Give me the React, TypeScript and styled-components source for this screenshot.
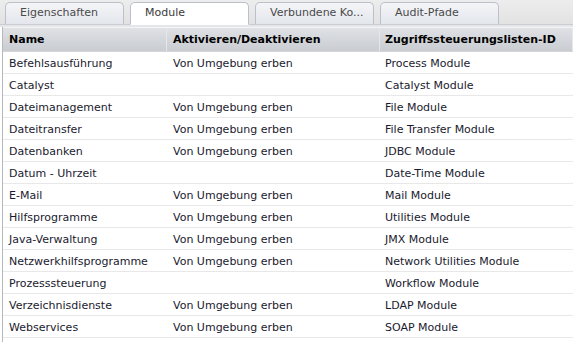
import React from "react";
import styled, { createGlobalStyle } from "styled-components";

const Global = createGlobalStyle`
	html, body { margin: 0; padding: 0; background: #fff; }
	body { font-family: "DejaVu Sans", Verdana, sans-serif; font-size: 11px; color: #000; }
`

const Page = styled.div({
	width: 573,
	height: 342,
	overflow: 'hidden',
	display: 'flex',
	flexDirection: 'column',
	background: '#fff'
})

const TabBar = styled.div({
	height: 25,
	display: 'flex',
	alignItems: 'flex-end',
	gap: 6,
	paddingLeft: 5,
	background: 'linear-gradient(#ededed, #e2e2e2)',
	borderBottom: '1px solid #c9ccd2',
	boxSizing: 'border-box'
})

const Tab = styled.div<{ $active?: boolean }>(({ $active }) => ({
	width: 119,
	height: $active ? 23 : 22,
	boxSizing: 'border-box',
	border: '1px solid #bcc0c8',
	borderBottom: $active ? '1px solid #fff' : 'none',
	borderRadius: '5px 5px 0 0',
	background: $active ? '#fff' : 'linear-gradient(#f4f5f8, #e3e6ec)',
	color: $active ? '#3a3a3a' : '#4a4a4a',
	padding: '3px 0 0 14px',
	marginBottom: $active ? -1 : 0,
	whiteSpace: 'nowrap',
	position: 'relative'
}))

const Strip = styled.div({
	height: 2,
	background: '#e4e6ea'
})

const Table = styled.div({
	flex: 1,
	borderLeft: '1px solid #b5b8be',
	marginLeft: 2,
	display: 'flex',
	flexDirection: 'column'
})

const Grid = styled.div({
	display: 'grid',
	gridTemplateColumns: '164px 213px 1fr'
})

const HeadRow = styled(Grid)({
	height: 23,
	background: 'linear-gradient(#dfe1e5, #c9ccd1)',
	borderTop: '1px solid #f4f5f7',
	borderBottom: '1px solid #d4d6da'
})

const HeadCell = styled.div({
	fontWeight: 'bold',
	display: 'flex',
	alignItems: 'center',
	paddingLeft: 6,
	borderRight: '1px solid #e6e7ea',
	whiteSpace: 'nowrap',
	overflow: 'hidden',
	color: '#000',
	'&:last-child': { paddingLeft: 5 }
})

const Row = styled(Grid)({
	height: 22,
	borderBottom: '1px solid #e8e8e8',
	boxSizing: 'border-box'
})

const Cell = styled.div({
	display: 'flex',
	alignItems: 'center',
	paddingLeft: 6,
	paddingTop: 1,
	whiteSpace: 'nowrap',
	color: '#1a1a2e',
	'&:last-child': { paddingLeft: 5 }
})

const rows: [string, string, string][] = [
	['Befehlsausführung', 'Von Umgebung erben', 'Process Module'],
	['Catalyst', '', 'Catalyst Module'],
	['Dateimanagement', 'Von Umgebung erben', 'File Module'],
	['Dateitransfer', 'Von Umgebung erben', 'File Transfer Module'],
	['Datenbanken', 'Von Umgebung erben', 'JDBC Module'],
	['Datum - Uhrzeit', '', 'Date-Time Module'],
	['E-Mail', 'Von Umgebung erben', 'Mail Module'],
	['Hilfsprogramme', 'Von Umgebung erben', 'Utilities Module'],
	['Java-Verwaltung', 'Von Umgebung erben', 'JMX Module'],
	['Netzwerkhilfsprogramme', 'Von Umgebung erben', 'Network Utilities Module'],
	['Prozesssteuerung', '', 'Workflow Module'],
	['Verzeichnisdienste', 'Von Umgebung erben', 'LDAP Module'],
	['Webservices', 'Von Umgebung erben', 'SOAP Module'],
]

const tabs = ['Eigenschaften', 'Module', 'Verbundene Ko...', 'Audit-Pfade']

export default function App() {
	return <Page>
		<Global />
		<TabBar>
			{tabs.map(t => <Tab key={t} $active={t === 'Module'}>{t}</Tab>)}
		</TabBar>
		<Strip />
		<Table>
			<HeadRow>
				<HeadCell>Name</HeadCell>
				<HeadCell>Aktivieren/Deaktivieren</HeadCell>
				<HeadCell>Zugriffssteuerungslisten-ID</HeadCell>
			</HeadRow>
			{rows.map(r => <Row key={r[0]}>
				<Cell>{r[0]}</Cell>
				<Cell>{r[1]}</Cell>
				<Cell>{r[2]}</Cell>
			</Row>)}
		</Table>
	</Page>
}
